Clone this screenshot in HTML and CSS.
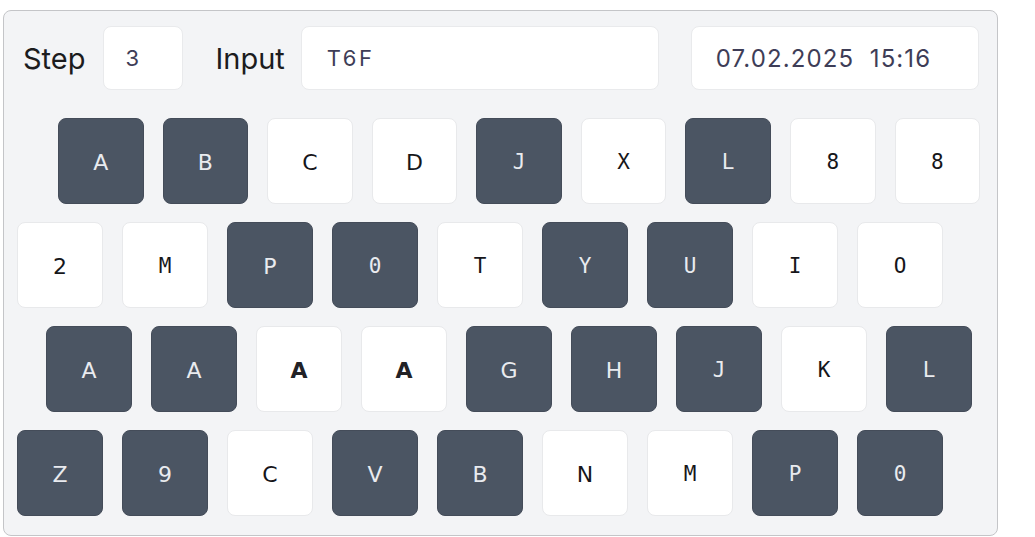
FILE: index.html
```html
<!DOCTYPE html>
<html lang="en">
<head>
<meta charset="utf-8">
<title>Keyboard</title>
<link rel="stylesheet" href="styles.css">
</head>
<body>
<div class="panel">
  <div class="header">
    <span class="label">Step</span>
    <div class="field field-step">3</div>
    <span class="label label-input">Input</span>
    <div class="field field-input">T6F</div>
    <div class="field field-date">07.02.2025&nbsp; 15:16</div>
  </div>
  <div class="keys">
    <div class="row row-1">
      <div class="key dark sans">A</div>
      <div class="key dark sans">B</div>
      <div class="key sans">C</div>
      <div class="key sans">D</div>
      <div class="key dark mono">J</div>
      <div class="key mono">X</div>
      <div class="key dark mono">L</div>
      <div class="key mono">8</div>
      <div class="key mono">8</div>
    </div>
    <div class="row row-2">
      <div class="key sans">2</div>
      <div class="key mono">M</div>
      <div class="key dark sans">P</div>
      <div class="key dark mono">0</div>
      <div class="key mono">T</div>
      <div class="key dark mono">Y</div>
      <div class="key dark mono">U</div>
      <div class="key mono">I</div>
      <div class="key mono">O</div>
    </div>
    <div class="row row-3">
      <div class="key dark sans">A</div>
      <div class="key dark sans">A</div>
      <div class="key sans bold">A</div>
      <div class="key sans bold">A</div>
      <div class="key dark sans">G</div>
      <div class="key dark sans">H</div>
      <div class="key dark mono">J</div>
      <div class="key mono">K</div>
      <div class="key dark mono">L</div>
    </div>
    <div class="row row-4">
      <div class="key dark sans">Z</div>
      <div class="key dark sans">9</div>
      <div class="key sans">C</div>
      <div class="key dark sans">V</div>
      <div class="key dark sans">B</div>
      <div class="key sans">N</div>
      <div class="key mono">M</div>
      <div class="key dark mono">P</div>
      <div class="key dark mono">0</div>
    </div>
  </div>
</div>
</body>
</html>
```
FILE: styles.css
```css
html, body {
  margin: 0;
  padding: 0;
  background: #ffffff;
}

body {
  font-family: Inter, "Noto Sans", sans-serif;
}

.panel {
  box-sizing: border-box;
  width: 995px;
  height: 526px;
  margin: 10px 0 0 3px;
  border: 1.5px solid #c4c5c8;
  border-radius: 8px;
  background: #f3f4f6;
  padding: 15px 17px 0 0;
}

.header {
  display: flex;
  align-items: center;
  height: 64px;
  padding-left: 19px;
}

.label {
  font-size: 29px;
  color: #1c1c1e;
  margin-right: 18px;
}

.label-input {
  margin-left: 32px;
  margin-right: 16px;
}

.field {
  box-sizing: border-box;
  height: 64px;
  background: #ffffff;
  border: 1px solid #e9eaec;
  border-radius: 8px;
  display: flex;
  align-items: center;
  font-size: 22px;
  color: #3e3d57;
}

.field-step {
  width: 80px;
  padding-left: 21px;
}

.field-input {
  width: 358px;
  padding-left: 25px;
  letter-spacing: 2.5px;
}

.field-date {
  width: 288px;
  margin-left: 32px;
  padding-left: 24px;
  font-size: 24px;
  letter-spacing: 1.1px;
}

.keys {
  display: flex;
  flex-direction: column;
  gap: 18px;
  margin-top: 28px;
}

.row {
  display: flex;
  gap: 19px;
}

.row-1 { padding-left: 54px; }
.row-2 { padding-left: 13px; }
.row-3 { padding-left: 42px; }
.row-4 { padding-left: 13px; }

.key {
  box-sizing: border-box;
  width: 86px;
  height: 86px;
  border-radius: 8px;
  background: #ffffff;
  border: 1px solid #e8e9eb;
  display: flex;
  align-items: center;
  justify-content: center;
  color: #16161a;
  padding-top: 2px;
}

.key.dark {
  background: #4b5563;
  border-color: #444c59;
  color: #e9ebef;
}

.sans {
  font-family: "DejaVu Sans", "Noto Sans", sans-serif;
  font-size: 22px;
}

.mono {
  font-family: "DejaVu Sans Mono", "Liberation Mono", monospace;
  font-size: 21px;
}

.bold {
  font-weight: bold;
  font-size: 22px;
  color: #222226;
}
```
